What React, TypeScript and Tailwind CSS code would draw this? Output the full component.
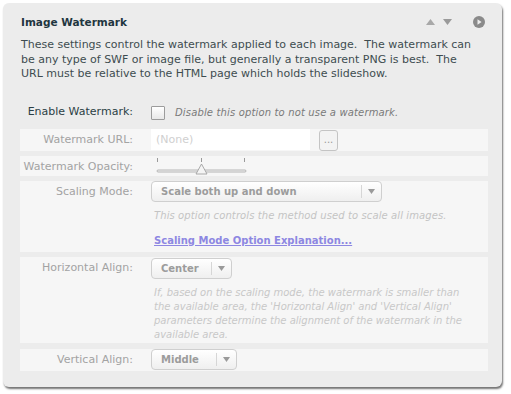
import React from "react";

const font = { fontFamily: '"DejaVu Sans", Verdana, sans-serif' };

function Select({ label, width }: { label: string; width: string }) {
  return (
    <div
      className={`flex h-[21px] ${width} items-center rounded-[4px] border border-[#cfcfcf] bg-gradient-to-b from-white to-[#efefef]`}
    >
      <span className="flex-1 whitespace-nowrap pl-[9px] text-[10px] font-bold text-[#9c9c9c]">{label}</span>
      <span className="h-[13px] border-l border-[#d6d6d6]" />
      <span className="flex w-[19px] justify-center">
        <svg width="7" height="5" viewBox="0 0 7 5">
          <path d="M0 0h7L3.5 5z" fill="#9a9a9a" />
        </svg>
      </span>
    </div>
  );
}

function Row({ label, children }: { label: string; children: React.ReactNode }) {
  return (
    <div className="flex">
      <div className="h-[21px] w-[113px] shrink-0 whitespace-nowrap text-right text-[11px] leading-[21px] text-[#a3a3a3]">
        {label}
      </div>
      <div className="ml-[18px] flex-1">{children}</div>
    </div>
  );
}

export default function App() {
  return (
    <div className="min-h-[394px] bg-white p-[3px]" style={font}>
      <div className="flex h-[384px] w-[499px] flex-col rounded-[6px] bg-[#ececec] shadow-[1px_2px_2px_rgba(0,0,0,0.55)]">
        {/* header */}
        <div className="flex items-center pl-[18px] pr-[17px] pt-[12px]">
          <span className="flex-1 text-[10.5px] font-bold leading-[14px] text-[#1f3640]">Image Watermark</span>
          <svg width="9" height="6" viewBox="0 0 9 6" className="mr-[8px]">
            <path d="M4.5 0L9 6H0z" fill="#a8a8a8" />
          </svg>
          <svg width="9" height="6" viewBox="0 0 9 6" className="mr-[21px]">
            <path d="M0 0h9L4.5 6z" fill="#9a9a9a" />
          </svg>
          <svg width="12" height="12" viewBox="0 0 12 12">
            <circle cx="6" cy="6" r="6" fill="#8a8a8a" />
            <path d="M4.5 3.2L8.6 6 4.5 8.8z" fill="#ececec" />
          </svg>
        </div>

        {/* description */}
        <div className="mt-[9px] whitespace-pre pl-[18px] text-[11px] leading-[14.5px] text-[#3e4c50]">
          <div>These settings control the watermark applied to each image.  The watermark can</div>
          <div>be any type of SWF or image file, but generally a transparent PNG is best.  The</div>
          <div>URL must be relative to the HTML page which holds the slideshow.</div>
        </div>

        {/* rows */}
        <div className="ml-[17px] mt-[20px] flex w-[468px] flex-col gap-[5px]">
          <div className="flex h-[22px] items-center">
            <div className="w-[113px] whitespace-nowrap text-right text-[11px] text-[#2b3f45]">Enable Watermark:</div>
            <div className="ml-[18px] h-[14px] w-[14px] rounded-[1px] border border-[#9c9c9c] bg-gradient-to-b from-white to-[#e8e8e8]" />
            <span className="ml-[10px] text-[10px] italic tracking-[0.15px] text-[#7a7a7a]">Disable this option to not use a watermark.</span>
          </div>

          <div className="h-[22px] bg-[#f6f6f6]">
            <Row label="Watermark URL:">
              <div className="flex items-start">
                <div className="h-[21px] w-[159px] bg-white pl-[5px] text-[11px] leading-[21px] text-[#d0d0d0]">(None)</div>
                <div className="ml-[9px] mt-[1px] flex h-[21px] w-[19px] items-center justify-center rounded-[3px] border border-[#c4c4c4] bg-[#f3f3f3] text-[10px] leading-none text-[#999]">
                  ...
                </div>
              </div>
            </Row>
          </div>

          <div className="h-[20px] bg-[#f6f6f6]">
            <Row label="Watermark Opacity:">
              <svg width="96" height="20" viewBox="0 0 96 20" className="ml-[4px]">
                <path d="M2.5 2v4M46.5 2v4M89.5 2v4" stroke="#9a9a9a" strokeWidth="1" />
                <rect x="2" y="14" width="89" height="2" rx="1" fill="#f2f2f2" stroke="#a6a6a6" strokeWidth="0.8" />
                <path d="M46.5 8L52 18H41z" fill="#f4f4f4" stroke="#a0a0a0" strokeWidth="0.9" />
              </svg>
            </Row>
          </div>

          <div className="h-[71px] bg-[#f6f6f6]">
            <Row label="Scaling Mode:">
              <Select label="Scale both up and down" width="w-[231px]" />
              <div className="mt-[7px] pl-[3px] text-[10px] italic leading-[14px] tracking-[0.1px] text-[#c4c4c4]">
                This option controls the method used to scale all images.
              </div>
              <div className="mt-[11px] pl-[3px] text-[10px] font-bold leading-[14px] text-[#8d87e2] underline">
                Scaling Mode Option Explanation...
              </div>
            </Row>
          </div>

          <div className="h-[86px] bg-[#f6f6f6]">
            <Row label="Horizontal Align:">
              <div className="pt-[1px]">
                <Select label="Center" width="w-[81px]" />
              </div>
              <div className="mt-[7px] whitespace-pre pl-[3px] text-[10px] italic leading-[14px] text-[#c8c8c8]">
                <div>If, based on the scaling mode, the watermark is smaller than</div>
                <div>the available area, the 'Horizontal Align' and 'Vertical Align'</div>
                <div>parameters determine the alignment of the watermark in the</div>
                <div>available area.</div>
              </div>
            </Row>
          </div>

          <div className="mt-[1px] h-[22px] bg-[#f6f6f6]">
            <Row label="Vertical Align:">
              <Select label="Middle" width="w-[86px]" />
            </Row>
          </div>
        </div>
      </div>
    </div>
  );
}
